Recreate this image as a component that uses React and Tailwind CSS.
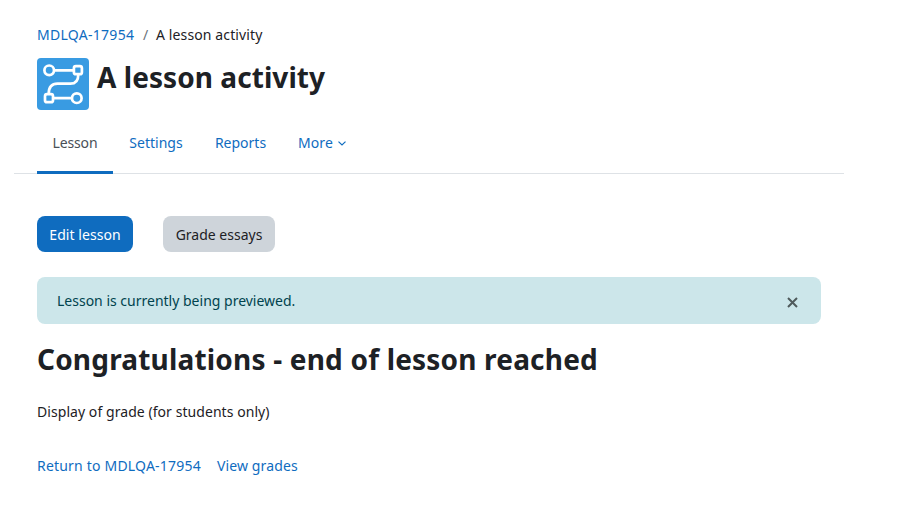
const tabs = [
  { label: "Lesson", active: true, className: "w-[76px] tracking-[-0.15px]" },
  { label: "Settings", className: "w-[86px]" },
  { label: "Reports", className: "w-[83px]" }
];

function LessonIcon() {
  return (
    <span className="flex size-[52px] shrink-0 rounded-[4px] bg-[#399be2]">
      <svg viewBox="0 0 52 52" className="size-[52px]" fill="none" stroke="#fff" strokeWidth="2.7">
        <circle cx="12.2" cy="12.3" r="4.8" />
        <rect x="36.9" y="8.2" width="8" height="8" rx="2" />
        <rect x="8" y="36.2" width="8" height="8" rx="2" />
        <circle cx="39.8" cy="40.2" r="4.8" />
        <path d="M17.2 12.3h19.5M16.1 40.2h18.6M41.3 16.4c0 6-2.6 9.3-8 9.3H20.5c-5.8 0-8.8 3.5-8.8 10.3" />
      </svg>
    </span>
  );
}

function Tab({ label, active, className }) {
  return (
    <a
      href="#"
      className={`flex h-[62px] justify-center border-b-[3px] pt-[19px] ${active ? "border-[#0f6cbf] text-[#495057]" : "border-transparent text-[#0f6cbf]"} ${className}`}
    >
      {label}
    </a>
  );
}

export default function App() {
  return (
    <div className="h-[518px] w-full overflow-hidden bg-white font-['Noto_Sans',sans-serif] text-[14px] leading-6 whitespace-nowrap text-[#1d2125]">
      <main className="w-[844px] pt-[23px] pl-[14px]">
        <header className="pl-[23px]">
          <nav className="flex tracking-[0.12px]">
            <a href="#" className="w-[106px] tracking-[0.28px] text-[#0f6cbf]">MDLQA-17954</a>
            <span className="w-[13px] text-[#6a737b]">/</span>
            <span>A lesson activity</span>
          </nav>
          <div className="mt-[11px] flex gap-2">
            <LessonIcon />
            <h1 className="text-[28px] leading-[39px] font-bold tracking-[0.06px]">A lesson activity</h1>
          </div>
        </header>

        <nav className="mt-0.5 flex border-b border-[#dee2e6] pl-[23px]">
          {tabs.map(tab => (
            <div key={tab.label} className="-mb-px">
              <Tab {...tab} />
            </div>
          ))}
          <a href="#" className="flex pt-[19px] pl-4 tracking-[0.1px] text-[#0f6cbf]">
            More
            <svg viewBox="0 0 8 5" className="mt-[10px] ml-[5px] h-[5px] w-2" fill="none" stroke="currentColor" strokeWidth="1.2">
              <path d="M.5.6 4 4 7.5.6" />
            </svg>
          </a>
        </nav>

        <section className="pt-[42px] pr-[23px] pl-[23px]">
          <div className="flex gap-[30px]">
            <button className="h-9 w-24 rounded-lg bg-[#0f6cbf] pt-0.5 tracking-[0.05px] text-white">Edit lesson</button>
            <button className="h-9 w-28 rounded-lg bg-[#ced4da] pt-0.5">Grade essays</button>
          </div>

          <div className="mt-[25px] flex h-[47px] items-center justify-between rounded-lg bg-[#cce6ea] pr-[23px] pl-5 text-[#00434e]">
            <span>Lesson is currently being previewed.</span>
            <button aria-label="Dismiss this notification" className="mt-1 text-[#4f5a5c]">
              <svg viewBox="0 0 11 11" className="size-[11px]" fill="none" stroke="currentColor" strokeWidth="2">
                <path d="m1 1 9 9M10 1l-9 9" />
              </svg>
            </button>
          </div>

          <h2 className="mt-[15px] text-[28px] leading-10 font-bold tracking-[0.19px]">Congratulations - end of lesson reached</h2>
          <p className="mt-[21px] tracking-[0.06px]">Display of grade (for students only)</p>
          <div className="mt-[30px] flex text-[#0f6cbf]">
            <a href="#" className="w-[180px] tracking-[0.2px]">Return to MDLQA-17954</a>
            <a href="#" className="tracking-[0.12px]">View grades</a>
          </div>
        </section>
      </main>
    </div>
  );
}
